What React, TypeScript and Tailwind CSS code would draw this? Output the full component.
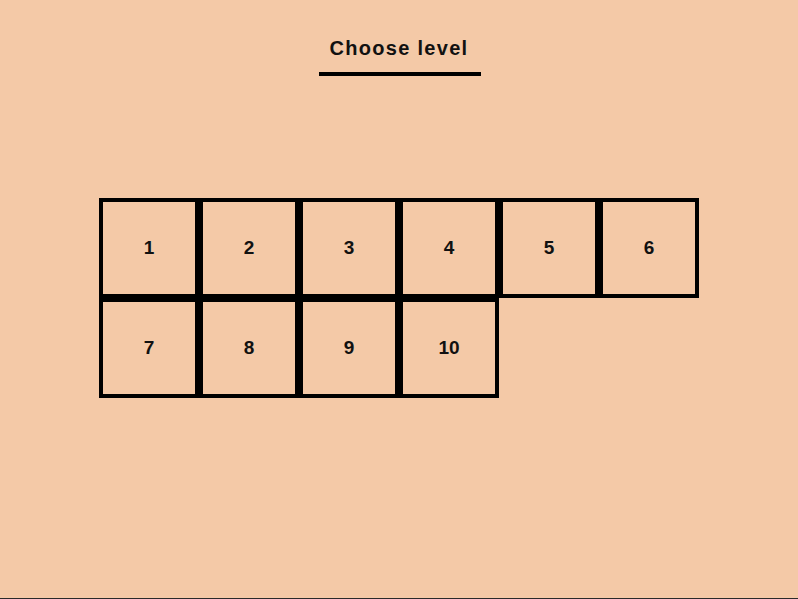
const levels = [1, 2, 3, 4, 5, 6, 7, 8, 9, 10];

export default function App() {
  return (
    <div className="w-[798px] h-[599px] bg-[#f4c9a7] flex flex-col items-center font-['Liberation_Sans',Arial,sans-serif] text-[#111] relative overflow-hidden">
      <h1 className="mt-[34px] text-[20px] leading-[28px] font-bold tracking-[1.3px]">Choose level</h1>
      <div className="mt-[10px] ml-[2px] w-[162px] h-1 bg-black" />
      <div className="mt-[122px] grid grid-cols-[repeat(6,100px)] w-[600px]">
        {levels.map((n) => (
          <div
            key={n}
            className="h-[100px] border-4 border-black flex items-center justify-center text-[19px] font-bold"
          >
            {n}
          </div>
        ))}
      </div>
      <div className="absolute left-0 right-0 bottom-0 h-px bg-[#2a2a2a]" />
    </div>
  );
}
